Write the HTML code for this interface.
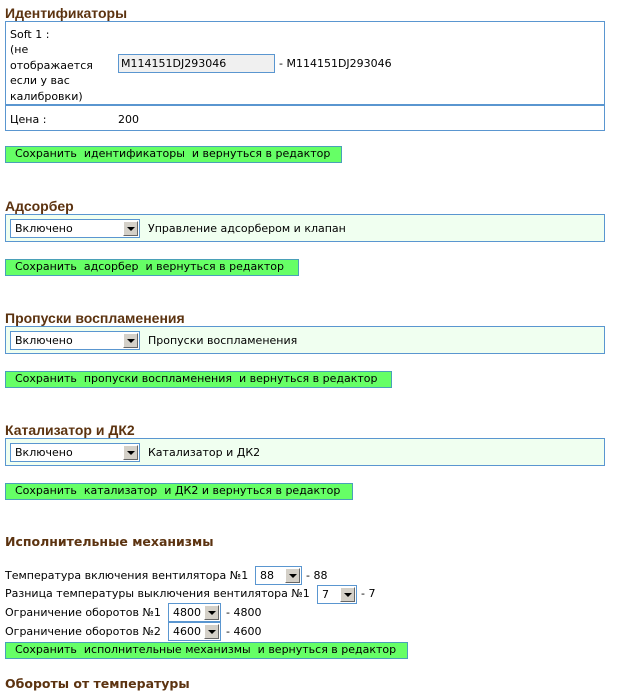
<!DOCTYPE html>
<html><head><meta charset="utf-8"><style>
body{margin:0;width:625px;height:689px;overflow:hidden;background:#fff;font-family:"DejaVu Sans","Liberation Sans",sans-serif;font-size:11px;color:#000;position:relative}
.a{position:absolute;white-space:nowrap;line-height:13px}
.h{position:absolute;font-family:"Liberation Sans",sans-serif;font-weight:bold;font-size:14px;color:#5c3310;white-space:nowrap;line-height:16px}
.box{position:absolute;border:1px solid #5a96d0;box-sizing:border-box}
.g{background:#f0fff0}
.btn{position:absolute;background:#66ff66;border:1px solid #4aa0b8;box-sizing:border-box;height:17px;line-height:14px;padding-left:9px;white-space:nowrap;font-size:11px}
.sel{position:absolute;border:1px solid #5a96d0;box-sizing:border-box;background:#fff;height:19px}
.sel span{position:absolute;left:4px;top:2px;line-height:13px}
.sel i{position:absolute;right:1px;top:1px;bottom:1px;width:15px;background:#d4d0c8;border-left:1px solid #fff;border-top:1px solid #fff;border-right:1px solid #666;border-bottom:1px solid #666;box-sizing:border-box}
.sel i:after{content:"";position:absolute;left:3px;top:5px;border-left:4px solid transparent;border-right:4px solid transparent;border-top:4px solid #000}
</style></head><body>
<div class="h" style="left:5px;top:5px">Идентификаторы</div>
<div class="box" style="left:5px;top:21px;width:600px;height:110px"></div>
<div style="position:absolute;left:5px;top:104px;width:600px;height:2px;background:#5a96d0"></div>
<div class="a" style="left:10px;top:27px;line-height:15.4px">Soft 1 :<br>(не<br>отображается<br>если у вас<br>калибровки)</div>
<div style="position:absolute;left:118px;top:54px;width:157px;height:19px;box-sizing:border-box;border:1px solid #5a96d0;background:#f0f0f0"></div>
<div class="a" style="left:121px;top:57px">M114151DJ293046</div>
<div class="a" style="left:279px;top:57px">- M114151DJ293046</div>
<div class="a" style="left:10px;top:113px">Цена :</div>
<div class="a" style="left:118px;top:113px">200</div>
<div class="btn" style="left:5px;top:146px;width:337px">Сохранить &nbsp;идентификаторы &nbsp;и вернуться в редактор</div>

<div class="h" style="left:5px;top:198px">Адсорбер</div>
<div class="box g" style="left:5px;top:214px;width:600px;height:28px"></div>
<div class="sel" style="left:10px;top:219px;width:130px"><span>Включено</span><i></i></div>
<div class="a" style="left:148px;top:222px">Управление адсорбером и клапан</div>
<div class="btn" style="left:5px;top:259px;width:294px">Сохранить &nbsp;адсорбер &nbsp;и вернуться в редактор</div>

<div class="h" style="left:5px;top:310px">Пропуски воспламенения</div>
<div class="box g" style="left:5px;top:326px;width:600px;height:28px"></div>
<div class="sel" style="left:10px;top:331px;width:130px"><span>Включено</span><i></i></div>
<div class="a" style="left:148px;top:334px">Пропуски воспламенения</div>
<div class="btn" style="left:5px;top:371px;width:387px">Сохранить &nbsp;пропуски воспламенения &nbsp;и вернуться в редактор</div>

<div class="h" style="left:5px;top:422px">Катализатор и ДК2</div>
<div class="box g" style="left:5px;top:438px;width:600px;height:28px"></div>
<div class="sel" style="left:10px;top:443px;width:130px"><span>Включено</span><i></i></div>
<div class="a" style="left:148px;top:446px">Катализатор и ДК2</div>
<div class="btn" style="left:5px;top:483px;width:348px">Сохранить &nbsp;катализатор &nbsp;и ДК2 и вернуться в редактор</div>

<div class="h" style="left:5px;top:534px;font-family:'DejaVu Sans',sans-serif;font-size:12.5px">Исполнительные механизмы</div>
<div class="a" style="left:5px;top:569px">Температура включения вентилятора №1</div>
<div class="sel" style="left:255px;top:566px;width:47px"><span>88</span><i></i></div>
<div class="a" style="left:306px;top:569px">- 88</div>
<div class="a" style="left:5px;top:587px">Разница температуры выключения вентилятора №1</div>
<div class="sel" style="left:317px;top:585px;width:40px"><span>7</span><i></i></div>
<div class="a" style="left:361px;top:587px">- 7</div>
<div class="a" style="left:5px;top:606px">Ограничение оборотов №1</div>
<div class="sel" style="left:168px;top:603px;width:53px"><span>4800</span><i></i></div>
<div class="a" style="left:226px;top:606px">- 4800</div>
<div class="a" style="left:5px;top:625px">Ограничение оборотов №2</div>
<div class="sel" style="left:168px;top:622px;width:53px"><span>4600</span><i></i></div>
<div class="a" style="left:226px;top:625px">- 4600</div>
<div class="btn" style="left:5px;top:642px;width:403px">Сохранить &nbsp;исполнительные механизмы &nbsp;и вернуться в редактор</div>

<div class="h" style="left:5px;top:676px;font-family:'DejaVu Sans',sans-serif;font-size:12.5px">Обороты от температуры</div>
</body></html>
